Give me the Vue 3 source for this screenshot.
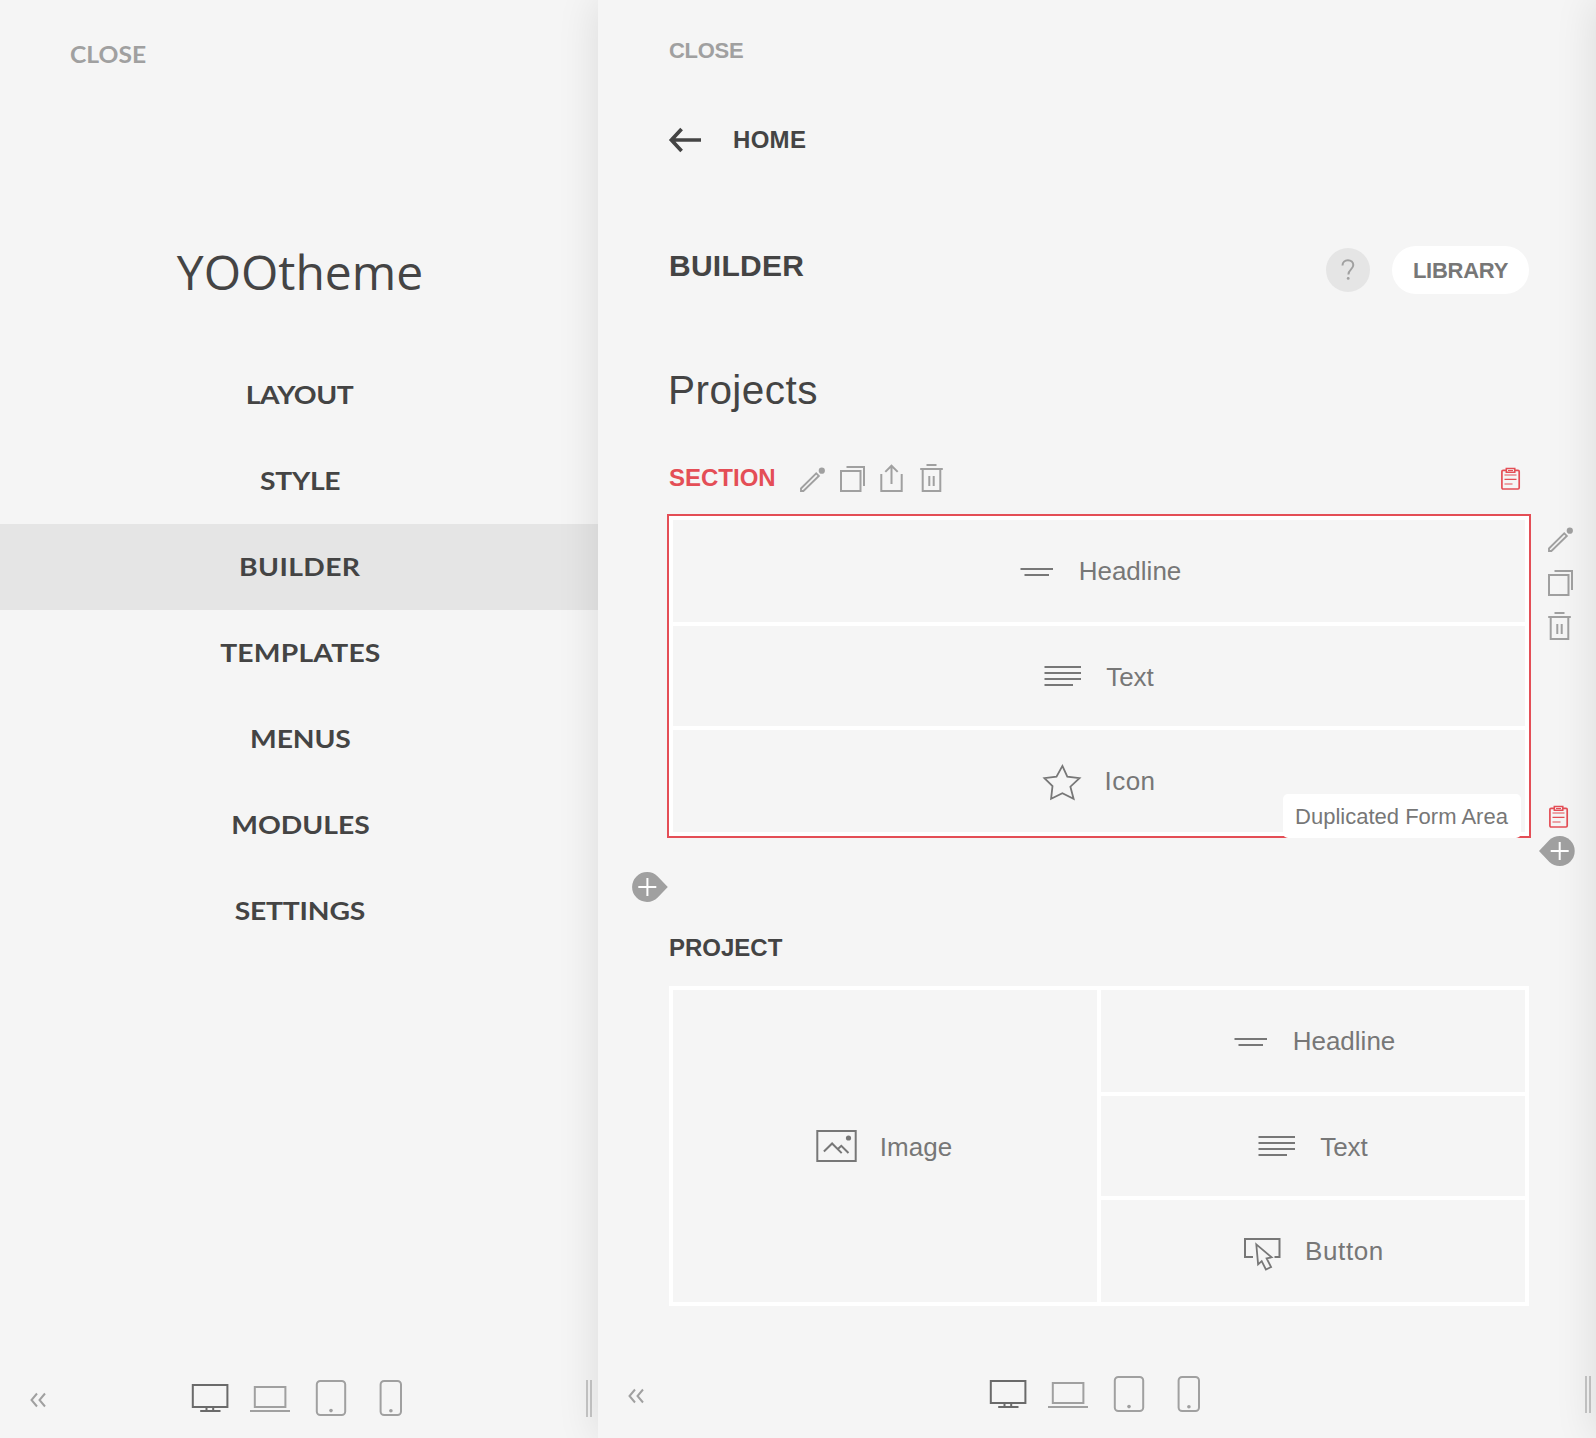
<script setup>
import { h } from 'vue'

const menu = [
  { label: 'LAYOUT', spacing: -0.36 },
  { label: 'STYLE', spacing: -0.27 },
  { label: 'BUILDER', spacing: 0.36, active: true },
  { label: 'TEMPLATES', spacing: 0.2 },
  { label: 'MENUS', spacing: -0.1 },
  { label: 'MODULES', spacing: 0 },
  { label: 'SETTINGS', spacing: -0.16 },
]

const glyphs = {
  // element icons, 40x40
  headline: { box: 40, body: [['path', { d: 'M3.500 18H36M7.500 24H32' }]] },
  text: { box: 40, body: [['path', { d: 'M1.500 11h36.500M1.500 17h36.500M1.500 23h36.500M1.500 29h28.500' }]] },
  star: { box: 40, body: [['path', { d: 'M20.400 4.900l4.900 10.700 12.200 1.500-9.100 8.600 3.200 12-11.200-5.500-11.300 5.500 1.400-12.500-8.100-8.100 12.100-1.500z', 'stroke-width': 1.800 }]] },
  image: {
    box: 42,
    body: [
      ['path', { d: 'M2.300 6h38.400v30H2.300z' }],
      ['path', { d: 'M8.900 26.500l8.200-8 9.600 9.600M22.600 24.200l3.700-3.400 7.200 7.200' }],
      ['circle', { cx: 33.500, cy: 13, r: 2.600, fill: 'currentColor', stroke: 'none' }],
    ],
  },
  button: {
    box: 40,
    body: [
      ['path', { d: 'M11 26H3V8h34.500v18H32.500' }],
      ['path', { d: 'M14.300 13.400l15.300 12.900-5 1 4.500 8.700-5.200 2.500-4.200-8.400-3.600 3.300z', 'stroke-width': 1.800 }],
    ],
  },
  // edit icons, 28x28
  pencil: {
    box: 28,
    body: [
      ['path', { d: 'M16.200 9.400L1 24.500V27h2.400L18.800 11.900z', 'stroke-width': 1.900 }],
      ['circle', { cx: 21.800, cy: 6.700, r: 3.100, fill: 'currentColor', stroke: 'none' }],
    ],
  },
  copy: { box: 28, body: [['path', { d: 'M1 7h19.500v20H1zM6.500 3h17.500v19' }]] },
  share: { box: 28, body: [['path', { d: 'M1.300 10v17h20.400V10M11.500 20V1.800M5.300 7.900l6.200-6.200 6.200 6.200' }]] },
  trash: { box: 28, body: [['path', { d: 'M2.700 5v22h17.600V5M.2 5h22.600M6.500 1h10M9.300 12v10M13.700 12v10' }]] },
  clipboard: {
    box: 28,
    body: [
      ['rect', { x: 1.900, y: 6.300, width: 17.300, height: 18.700, rx: 1.200, 'stroke-width': 1.700 }],
      ['path', { d: 'M6.300 4.500h8.500v3.700H6.300z', fill: '#f5f5f5', 'stroke-width': 1.500 }],
      ['path', { d: 'M8 6.500h5M4.500 11h12M4.500 15.300h12M4.500 20h8', 'stroke-width': 1.200 }],
    ],
  },
  // device icons, 40x40
  desktop: {
    box: 40,
    body: [['path', { d: 'M2.800 7h34.600v22H2.800zM10.200 33h20.300M16.500 29v4M23.200 29v4' }]],
  },
  laptop: { box: 40, body: [['path', { d: 'M4.800 9h30.600v20H4.800zM0 33h40' }]] },
  tablet: {
    box: 40,
    body: [
      ['rect', { x: 5.800, y: 3, width: 28.400, height: 34, rx: 3.500 }],
      ['circle', { cx: 20, cy: 32.600, r: 1.800, fill: 'currentColor', stroke: 'none' }],
    ],
  },
  phone: {
    box: 40,
    body: [
      ['rect', { x: 9.600, y: 3, width: 20.400, height: 34, rx: 3.500 }],
      ['circle', { cx: 19.900, cy: 32.800, r: 1.800, fill: 'currentColor', stroke: 'none' }],
    ],
  },
}

const Glyph = ({ name }) => {
  const g = glyphs[name]
  return h(
    'svg',
    { viewBox: `0 0 ${g.box} ${g.box}`, width: g.box, height: g.box, fill: 'none', stroke: 'currentColor', 'stroke-width': 2 },
    g.body.map(([tag, attrs]) => h(tag, attrs)),
  )
}
Glyph.props = ['name']

const devices = ['desktop', 'laptop', 'tablet', 'phone']

const sectionElements = [
  { icon: 'headline', label: 'Headline', cls: 'headline' },
  { icon: 'text', label: 'Text', cls: 'text' },
  { icon: 'star', label: 'Icon', cls: 'icon' },
]
const projectElements = [
  { icon: 'headline', label: 'Headline', cls: 'headline' },
  { icon: 'text', label: 'Text', cls: 'text' },
  { icon: 'button', label: 'Button', cls: 'button' },
]
</script>

<template>
  <div class="app">
    <aside class="panel main-panel">
      <a class="close">CLOSE</a>
      <div class="brand">YOOtheme</div>
      <nav class="menu">
        <a v-for="m in menu" :key="m.label" class="menu-item" :class="{ active: m.active }">
          <span class="menu-label" :style="{ letterSpacing: m.spacing + 'px' }">{{ m.label }}</span>
        </a>
      </nav>
      <footer class="footer">
        <svg class="collapse" width="16" height="16" viewBox="0 0 16 16"><path d="M7 1.500L1.500 8 7 14.500M15 1.500L9.500 8l5.500 6.500" /></svg>
        <div class="devices">
          <Glyph v-for="d in devices" :key="d" :name="d" class="device" :class="d" />
        </div>
        <div class="handle"></div>
      </footer>
    </aside>

    <main class="panel builder-panel">
      <a class="close">CLOSE</a>
      <a class="back">
        <svg width="32" height="26" viewBox="0 0 32 26"><path d="M12.600 2L2.400 13l10.200 11M2 13h30" /></svg>
        <span>HOME</span>
      </a>

      <header class="head">
        <h1>BUILDER</h1>
        <div class="head-actions">
          <span class="help">
            <svg width="14" height="22" viewBox="0 0 14 22">
              <path d="M1.500 6.500C1.500 3.200 3.800 1.200 6.900 1.200s5.400 2 5.400 4.900c0 4.200-4.900 4.400-4.900 9.400" />
              <circle cx="7.200" cy="19.400" r="1.400" />
            </svg>
          </span>
          <a class="library">LIBRARY</a>
        </div>
      </header>

      <h2>Projects</h2>

      <div class="section-head">
        <span class="section-title">SECTION</span>
        <div class="tools">
          <Glyph name="pencil" /><Glyph name="copy" /><Glyph name="share" /><Glyph name="trash" />
        </div>
        <Glyph name="clipboard" class="red" />
      </div>

      <section class="box selected">
        <div class="col">
          <div v-for="e in sectionElements" :key="e.label" class="cell" :class="e.cls">
            <Glyph :name="e.icon" /><span>{{ e.label }}</span>
          </div>
        </div>
        <div class="row-tools">
          <Glyph name="pencil" /><Glyph name="copy" /><Glyph name="trash" />
        </div>
        <Glyph name="clipboard" class="red row-clip" />
        <svg class="add add-row" width="36" height="30" viewBox="0 0 36 30">
          <path class="drop" d="M0 15L10.400 4.100A15 15 0 1 1 10.400 25.900Z" />
          <path class="plus" d="M11.700 15h18M20.700 6v18" />
        </svg>
        <div class="tip">Duplicated Form Area</div>
      </section>

      <svg class="add add-section" width="36" height="30" viewBox="0 0 36 30">
        <path class="drop" d="M35.800 15L25.700 4.400A15 15 0 1 0 25.700 25.600Z" />
        <path class="plus" d="M6.300 15h18M15.400 6v18" />
      </svg>

      <div class="project-title">PROJECT</div>
      <section class="box">
        <div class="col">
          <div class="cell image"><Glyph name="image" /><span>Image</span></div>
        </div>
        <div class="col">
          <div v-for="e in projectElements" :key="e.label" class="cell" :class="e.cls">
            <Glyph :name="e.icon" /><span>{{ e.label }}</span>
          </div>
        </div>
      </section>

      <footer class="footer">
        <svg class="collapse" width="16" height="16" viewBox="0 0 16 16"><path d="M7 1.500L1.500 8 7 14.500M15 1.500L9.500 8l5.500 6.500" /></svg>
        <div class="devices">
          <Glyph v-for="d in devices" :key="d" :name="d" class="device" :class="d" />
        </div>
        <div class="handle"></div>
      </footer>
    </main>
  </div>
</template>

<style>
body {
  background: #f5f5f5;
}
</style>

<style scoped>
.app {
  display: flex;
  width: 1596px;
  height: 1438px;
  overflow: hidden;
  position: relative;
  color: #444;
  font-family: "Liberation Sans", Arial, sans-serif;
}
/* shadow cast by the page preview next to the panels */
.app::after {
  content: "";
  position: absolute;
  left: 100%;
  top: 0;
  width: 200px;
  height: 100%;
  box-shadow: 0 0 40px rgba(0, 0, 0, 0.11);
}
svg {
  display: block;
  flex: none;
  overflow: visible;
}
.panel {
  box-sizing: border-box;
  display: flex;
  flex-direction: column;
  height: 1438px;
}
.main-panel {
  width: 598px;
}
.builder-panel {
  width: 998px;
  padding: 0 67px 0 71px;
  background: #f5f5f5;
  position: relative;
  box-shadow: 0 0 40px rgba(0, 0, 0, 0.11);
}
.close {
  color: #a0a0a0;
  font-weight: bold;
  font-size: 22px;
  line-height: 30px;
}
.main-panel .close {
  align-self: flex-start;
  margin: 40px 0 0 70px;
  font-family: Lato, sans-serif;
  transform: scaleX(1.12);
  transform-origin: 0 50%;
}
.brand {
  margin: 170px 0 0 2px;
  text-align: center;
  font: 48px/64px "Open Sans", sans-serif;
}
.menu {
  margin-top: 48px;
}
.menu-item {
  display: flex;
  justify-content: center;
  height: 86px;
  padding-left: 2px;
  line-height: 85px;
}
.menu-item.active {
  background: #e5e5e5;
}
.menu-label {
  font-family: Lato, sans-serif;
  font-weight: bold;
  font-size: 25.500px;
  transform: scaleX(1.108);
}

.builder-panel .close {
  margin-top: 36px;
  letter-spacing: -0.28px;
}
.back {
  display: flex;
  align-items: center;
  gap: 32px;
  margin-top: 59px;
  font-weight: bold;
  font-size: 24px;
  line-height: 30px;
  letter-spacing: 0.3px;
}
.back svg {
  fill: none;
  stroke: #444;
  stroke-width: 3.700;
}
.head {
  display: flex;
  justify-content: space-between;
  align-items: flex-start;
  height: 48px;
  margin-top: 91px;
}
h1 {
  margin: 0;
  font-size: 30px;
  line-height: 40px;
  letter-spacing: 0.25px;
}
.head-actions {
  display: flex;
  align-items: center;
  gap: 22px;
}
.help {
  display: flex;
  align-items: center;
  justify-content: center;
  width: 44px;
  height: 44px;
  border-radius: 50%;
  background: #e5e5e5;
}
.help path {
  fill: none;
  stroke: #a0a0a0;
  stroke-width: 2;
}
.help circle {
  fill: #a0a0a0;
}
.library {
  width: 137px;
  height: 48px;
  border-radius: 24px;
  background: #fff;
  color: #777;
  font-weight: bold;
  font-size: 22px;
  line-height: 49px;
  letter-spacing: -0.26px;
  text-align: center;
}
h2 {
  margin: 71px 0 0 -1px;
  font-weight: normal;
  font-size: 40.500px;
  line-height: 50px;
  letter-spacing: 0.45px;
}
.section-head {
  display: flex;
  height: 28px;
  margin-top: 49px;
}
.section-title {
  width: 131px;
  color: #e44e56;
  font-weight: bold;
  font-size: 24px;
  line-height: 28px;
}
.tools {
  display: flex;
  gap: 12px;
  flex: 1;
  color: #a0a0a0;
}
.red {
  color: #e44e56;
}
.section-head .red {
  margin: 0 1px 0 0;
}

.box {
  box-sizing: border-box;
  position: relative;
  display: flex;
  gap: 4px;
  height: 320px;
  border: 4px solid #fff;
  background: #fff;
}
.box.selected {
  margin-top: 24px;
  box-shadow: 0 0 0 2px #e44e56;
}
.col {
  flex: 1;
  display: grid;
  grid-template-rows: 102px 100px 102px;
  gap: 4px;
}
.cell {
  display: flex;
  align-items: center;
  justify-content: center;
  gap: 22px;
  background: #f5f5f5;
  color: #777;
  font-size: 26px;
  line-height: 30px;
}
.cell.text {
  gap: 23px;
  padding-right: 1px;
}
.cell.text span,
.cell.image span {
  padding-top: 2px;
}
.cell.icon {
  gap: 22px;
  letter-spacing: 0.5px;
}
.cell.button {
  gap: 23px;
  letter-spacing: 0.6px;
}
.cell.image {
  grid-row: 1 / -1;
  gap: 23px;
  padding-right: 3px;
}
.row-tools {
  position: absolute;
  left: 875px;
  top: 4px;
  display: grid;
  gap: 16px;
  color: #a0a0a0;
}
.row-clip {
  position: absolute;
  left: 874.500px;
  top: 282px;
}
.add .drop {
  fill: #a0a0a0;
}
.add .plus {
  fill: none;
  stroke: #fff;
  stroke-width: 2;
}
.add-row {
  position: absolute;
  left: 866px;
  top: 316px;
}
.tip {
  position: absolute;
  right: 4.500px;
  top: 274px;
  width: 238px;
  height: 44px;
  border-radius: 5px;
  background: #fff;
  color: #777;
  font-size: 22px;
  line-height: 45px;
  text-align: center;
  white-space: nowrap;
}
.add-section {
  margin: 36px 0 0 -37px;
}
.project-title {
  margin: 32px 0 24px;
  font-weight: bold;
  font-size: 24px;
  line-height: 28px;
}

.footer {
  display: flex;
  align-items: center;
  height: 40px;
  margin: auto 0 24px;
}
.main-panel .footer {
  margin-bottom: 20px;
  padding: 0 6px 0 30px;
}
.builder-panel .footer {
  margin-left: -41px;
  margin-right: -62px;
}
.collapse {
  position: relative;
  top: 2px;
  fill: none;
  stroke: #a0a0a0;
  stroke-width: 2;
}
.devices {
  display: flex;
  gap: 20.300px;
  margin-left: 144px;
  color: #a0a0a0;
}
.builder-panel .devices {
  margin-left: 344px;
}
.desktop {
  color: #6a6a6a;
}
.handle {
  box-sizing: border-box;
  width: 6px;
  height: 37px;
  margin-left: auto;
  border: solid #c6c6c6;
  border-width: 0 2px;
}
</style>
